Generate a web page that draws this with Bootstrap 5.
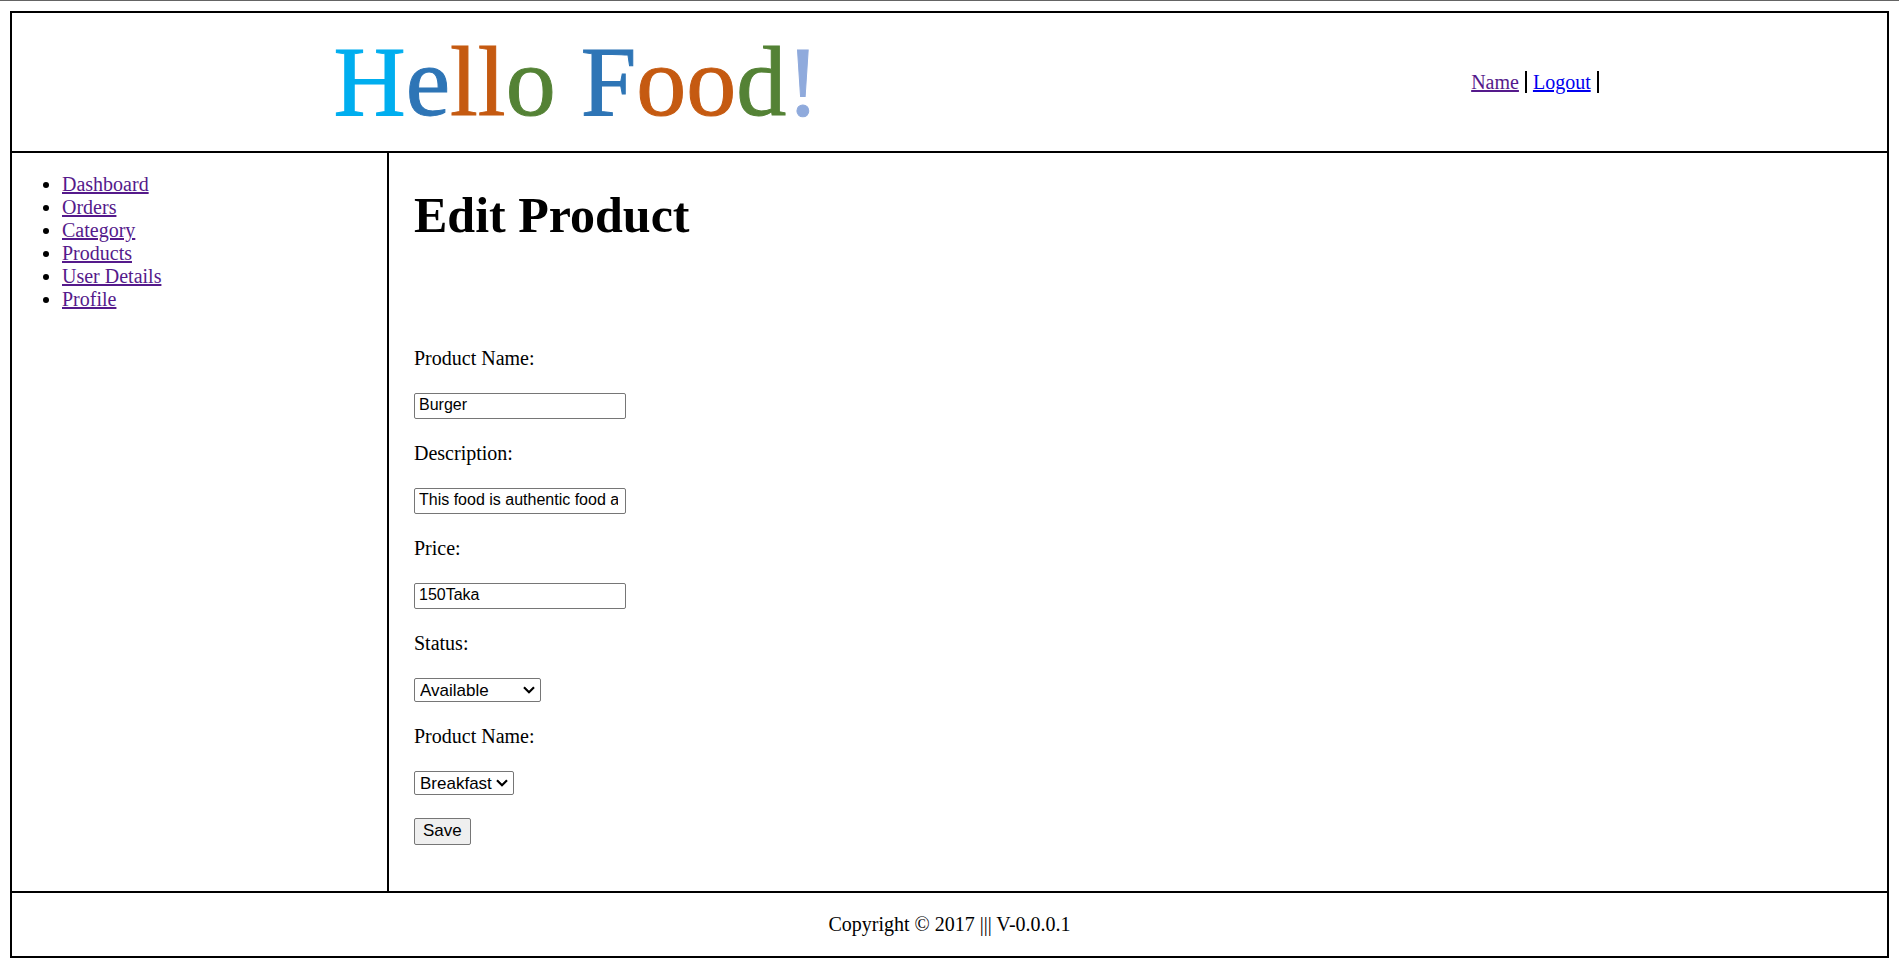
<!DOCTYPE html>
<html lang="en">
<head>
<meta charset="utf-8">
<meta name="viewport" content="width=device-width, initial-scale=1">
<title>Edit Product - Hello Food!</title>
<link rel="stylesheet" href="https://cdn.jsdelivr.net/npm/bootstrap@5.3.0/dist/css/bootstrap.min.css">
<style>
  body { font: 20px/23px "Liberation Serif", "Times New Roman", serif; color: #000; background: #fff; border-top: 1px solid #646464; }
  a { color: #551a8b; }
  a.unvisited { color: #00e; }
  .frame { margin: 10px; border: 2px solid #000; }
  .site-header { min-height: 140px; border-bottom: 2px solid #000; }
  .logo-cell { width: 60%; padding-left: 4px; }
  .account-cell { width: 37.5%; }
  .logo { font-size: 100px; line-height: 100px; white-space: nowrap; -webkit-text-stroke: 1px; }
  .c-sky { color: #00aeef; } .c-blue { color: #2e75b6; } .c-orange { color: #c55a11; }
  .c-green { color: #548235; } .c-lilac { color: #8faadc; }
  .account-link { border-right: 2px solid #000; padding-right: 6px; margin-right: 1px; }
  .sidebar { width: 20%; box-sizing: content-box; padding: 20px 0; border-right: 2px solid #000; flex: none; }
  .sidebar ul { padding-left: 50px; }
  .content { padding: 33px 25px 46px; }
  h1 { font-size: 50px; line-height: 58px; font-weight: 700; margin-bottom: 103px; }
  .stack { gap: 23px; }
  .field, .choice, .save { font: 17px/20px "Liberation Sans", Arial, sans-serif; color: #000; border: 1px solid #767676; border-radius: 2px; }
  .field { font-size: 16px; width: 212px; height: 26px; padding: 0 7px 2px 4px; background: #fff; }
  .choice { height: 24px; padding: 1px 18px 0 5px; appearance: none;
    background: #fff url("data:image/svg+xml,%3Csvg xmlns='http://www.w3.org/2000/svg' width='12' height='8' viewBox='0 0 12 8'%3E%3Cpath d='M1 1.2 6 6.2 11 1.2' fill='none' stroke='%23000' stroke-width='2.2'/%3E%3C/svg%3E") no-repeat right 5px center; }
  .choice-status { width: 127px; }
  .choice-category { width: 100px; }
  .save { height: 27px; padding: 0 8px 2px; background: #efefef; }
  .site-footer { padding: 20px; border-top: 2px solid #000; }
</style>
</head>
<body>
<div class="frame">
  <header class="site-header d-flex align-items-center justify-content-between">
    <div class="logo-cell text-center">
      <div class="logo"><span class="c-sky">H</span><span class="c-blue">e</span><span class="c-orange">ll</span><span class="c-green">o</span> <span class="c-blue">F</span><span class="c-orange">oo</span><span class="c-green">d</span><span class="c-lilac">!</span></div>
    </div>
    <nav class="account-cell text-center">
      <span class="account-link"><a href="#">Name</a></span>
      <span class="account-link"><a class="unvisited" href="#">Logout</a></span>
    </nav>
  </header>
  <div class="d-flex">
    <nav class="sidebar">
      <ul class="mb-0">
        <li><a href="#">Dashboard</a></li>
        <li><a href="#">Orders</a></li>
        <li><a href="#">Category</a></li>
        <li><a href="#">Products</a></li>
        <li><a href="#">User Details</a></li>
        <li><a href="#">Profile</a></li>
      </ul>
    </nav>
    <main class="content flex-grow-1">
      <h1>Edit Product</h1>
      <form class="stack d-flex flex-column align-items-start">
        <label for="name">Product Name:</label>
        <input class="field" id="name" type="text" value="Burger">
        <label for="description">Description:</label>
        <input class="field" id="description" type="text" value="This food is authentic food and tasty">
        <label for="price">Price:</label>
        <input class="field" id="price" type="text" value="150Taka">
        <label for="status">Status:</label>
        <select class="choice choice-status" id="status"><option>Available</option><option>Not Available</option></select>
        <label for="category">Product Name:</label>
        <select class="choice choice-category" id="category"><option>Breakfast</option><option>Lunch</option><option>Dinner</option></select>
        <button class="save" type="button">Save</button>
      </form>
    </main>
  </div>
  <footer class="site-footer text-center">Copyright © 2017 ||| V-0.0.0.1</footer>
</div>
<script src="https://cdn.jsdelivr.net/npm/bootstrap@5.3.0/dist/js/bootstrap.bundle.min.js"></script>
</body>
</html>
